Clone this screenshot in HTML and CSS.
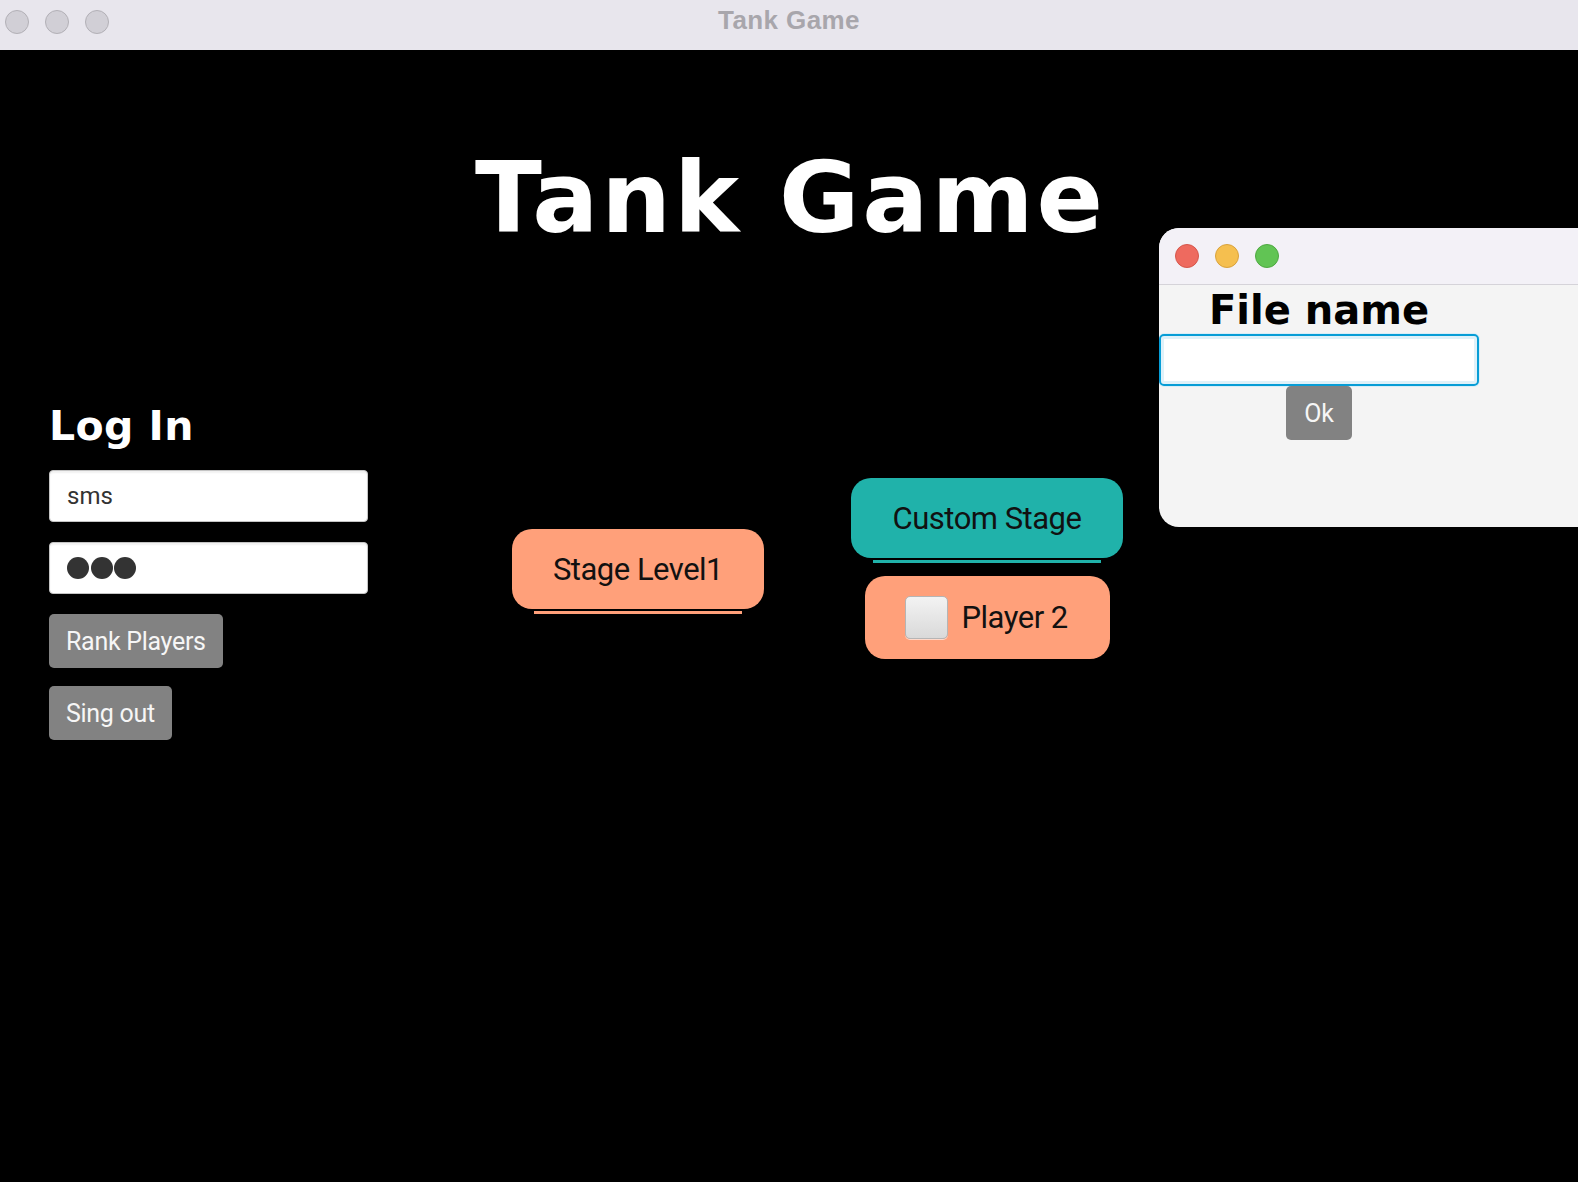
FILE: index.html
```html
<!DOCTYPE html>
<html lang="en">
<head>
<meta charset="utf-8">
<title>Tank Game</title>
<link rel="stylesheet" href="styles.css">
</head>
<body>
<div class="window">
  <header class="titlebar">
    <div class="lights">
      <span class="light"></span>
      <span class="light"></span>
      <span class="light"></span>
    </div>
    <div class="wintitle">Tank Game</div>
    <div></div>
  </header>
  <main class="stage">
    <h1 class="game-title">Tank Game</h1>
    <div class="content">
      <section class="login">
        <h2 class="login-title">Log In</h2>
        <input class="field field-user" type="text" value="sms">
        <div class="field field-pw"><span class="dot"></span><span class="dot"></span><span class="dot"></span></div>
        <button class="gray-btn rank">Rank Players</button>
        <button class="gray-btn">Sing out</button>
      </section>
      <button class="pill salmon stage-level">Stage Level1</button>
      <div class="right-col">
        <button class="pill teal custom">Custom Stage</button>
        <label class="pill salmon-flat player"><span class="box"></span><span>Player 2</span></label>
      </div>
    </div>
    <div class="dialog">
      <div class="dlg-bar">
        <span class="dl red"></span>
        <span class="dl yellow"></span>
        <span class="dl green"></span>
      </div>
      <div class="dlg-body">
        <div class="dlg-label">File name</div>
        <input class="dlg-field" type="text" value="">
        <button class="gray-btn ok">Ok</button>
      </div>
    </div>
  </main>
</div>
</body>
</html>
```
FILE: styles.css
```css
html, body {
  margin: 0;
  padding: 0;
  background: #000;
  overflow: hidden;
}
.window {
  width: 1578px;
  height: 1182px;
  display: flex;
  flex-direction: column;
}
.titlebar {
  height: 50px;
  flex: none;
  background: #e8e6ed;
  display: grid;
  grid-template-columns: 1fr auto 1fr;
  align-items: start;
}
.lights {
  display: flex;
  gap: 16px;
  padding: 10px 0 0 5px;
}
.light {
  width: 24px;
  height: 24px;
  box-sizing: border-box;
  border-radius: 50%;
  background: #d1cfd6;
  border: 1px solid #b2b0b6;
}
.wintitle {
  font: bold 26px/40px "Liberation Sans", Arial, sans-serif;
  letter-spacing: 0.4px;
  color: #a8a6ac;
}
.stage {
  flex: 1;
  position: relative;
  background: #000;
  padding-top: 91px;
}
.game-title {
  margin: 0;
  text-align: center;
  font: bold 98px/114px "DejaVu Sans", Verdana, sans-serif;
  letter-spacing: 2.9px;
  padding-left: 2.9px;
  color: #fff;
}
.content {
  margin-top: 147px;
  display: flex;
  align-items: flex-start;
  padding-left: 49px;
}
.login {
  width: 319px;
  display: flex;
  flex-direction: column;
  align-items: flex-start;
}
.login-title {
  margin: 0 0 20px 0;
  font: bold 41px/48px "DejaVu Sans", Verdana, sans-serif;
  letter-spacing: 0.4px;
  color: #fff;
}
.field {
  width: 319px;
  height: 52px;
  box-sizing: border-box;
  border: 1px solid #c4c4c4;
  border-radius: 4px;
  background: #fff;
  box-shadow: inset 0 2px 2px rgba(0,0,0,0.06);
  margin: 0 0 20px 0;
  padding: 0 0 0 17px;
  font: 24px "Roboto", "Liberation Sans", sans-serif;
  color: #333;
  outline: none;
}
.field-pw {
  display: flex;
  align-items: center;
  gap: 1.5px;
  padding-left: 17px;
}
.dot {
  width: 22px;
  height: 22px;
  border-radius: 50%;
  background: #333;
}
.gray-btn {
  height: 54px;
  border: none;
  border-radius: 5px;
  background: #828282;
  color: #f6f6f6;
  font: 25px "Roboto", "Liberation Sans", sans-serif;
  letter-spacing: -0.3px;
  padding: 0 17px;
  margin: 0;
  cursor: pointer;
}
.rank {
  margin-bottom: 18px;
}
.pill {
  height: 80px;
  box-sizing: border-box;
  border: none;
  border-radius: 20px;
  display: flex;
  align-items: center;
  justify-content: center;
  font: 31px "Roboto", "Liberation Sans", sans-serif;
  letter-spacing: -0.5px;
  color: #111;
  padding: 0;
}
.salmon {
  background: #ffa07a;
  box-shadow: 0 2px 0 #000, 0 27px 0 -22px #ffa07a;
}
.teal {
  background: #20b2aa;
  box-shadow: 0 2px 0 #000, 0 27px 0 -22px #20b2aa;
}
.salmon-flat {
  background: #ffa07a;
}
.stage-level {
  width: 252px;
  margin: 127px 0 0 144px;
}
.right-col {
  margin: 76px 0 0 87px;
  display: flex;
  flex-direction: column;
  align-items: center;
  gap: 18px;
}
.custom {
  width: 272px;
}
.player {
  width: 245px;
  height: 83px;
  justify-content: flex-start;
  padding-left: 40px;
  gap: 14px;
}
.box {
  width: 43px;
  height: 43px;
  box-sizing: border-box;
  border: 1px solid #b5b5b5;
  border-radius: 5px;
  background: linear-gradient(#f3f3f3, #d9d9d9);
  box-shadow: 0 1px 0 rgba(255,255,255,0.6);
}
.dialog {
  position: absolute;
  left: 1159px;
  top: 178px;
  width: 460px;
  height: 299px;
  background: #f4f4f4;
  border-radius: 20px 0 0 20px;
  overflow: hidden;
}
.dlg-bar {
  height: 56px;
  background: #f3f1f7;
  border-bottom: 1px solid #d5d3d9;
  display: flex;
  align-items: center;
  gap: 16px;
  padding-left: 16px;
}
.dl {
  width: 24px;
  height: 24px;
  box-sizing: border-box;
  border-radius: 50%;
}
.red { background: #ee6a5f; border: 1px solid #d5574c; }
.yellow { background: #f5bf4f; border: 1px solid #d8a23d; }
.green { background: #61c454; border: 1px solid #4fa842; }
.dlg-body {
  width: 320px;
  display: flex;
  flex-direction: column;
  align-items: center;
  padding-top: 2px;
}
.dlg-label {
  font: bold 40px/47px "DejaVu Sans", Verdana, sans-serif;
  color: #000;
}
.dlg-field {
  width: 320px;
  height: 52px;
  box-sizing: border-box;
  margin: 0;
  border: 2px solid #079dd6;
  border-radius: 5px;
  background: #fff;
  box-shadow: inset 0 0 0 3px #dff1f9, 0 0 0 1px #d9eef7;
  outline: none;
  padding: 0 14px;
  font: 26px "Roboto", "Liberation Sans", sans-serif;
}
.ok {
  width: 66px;
  padding: 0;
  text-align: center;
}
```
